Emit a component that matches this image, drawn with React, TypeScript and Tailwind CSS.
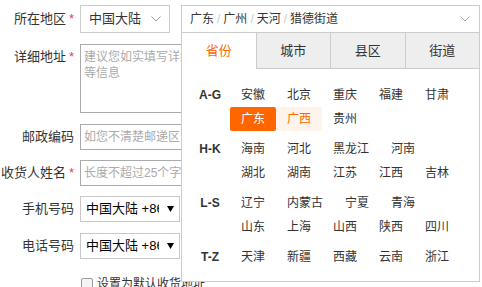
const groups: { label: string; rows: string[][] }[] = [
  { label: "A-G", rows: [["安徽", "北京", "重庆", "福建", "甘肃"], ["广东", "广西", "贵州"]] },
  { label: "H-K", rows: [["海南", "河北", "黑龙江", "河南"], ["湖北", "湖南", "江苏", "江西", "吉林"]] },
  { label: "L-S", rows: [["辽宁", "内蒙古", "宁夏", "青海"], ["山东", "上海", "山西", "陕西", "四川"]] },
  { label: "T-Z", rows: [["天津", "新疆", "西藏", "云南", "浙江"]] },
];

const tabs = ["省份", "城市", "县区", "街道"];

function Chevron({ color }: { color: string }) {
  return (
    <svg width="10" height="6" viewBox="0 0 10 6" fill="none">
      <polyline points="0.5,0.5 5,5 9.5,0.5" stroke={color} strokeWidth="1" />
    </svg>
  );
}

function Label({ text, required }: { text: string; required?: boolean }) {
  return (
    <div className="w-[74px] shrink-0 text-right text-[13px] leading-[16px] text-[#333]">
      {text}
      {required && <span className="ml-[3px] text-[#f4365d]">*</span>}
    </div>
  );
}

function CodeSelect() {
  return (
    <div className="ml-[6px] flex h-[26px] w-[100px] items-center border border-[#c8c8c8] pl-[5px]">
      <span className="w-[73px] overflow-hidden whitespace-nowrap text-[13px] text-black">中国大陆 +86</span>
      <svg className="ml-[8px]" width="7" height="6" viewBox="0 0 7 6">
        <polygon points="0,0 7,0 3.5,6" fill="#000" />
      </svg>
    </div>
  );
}

function AddressPanel() {
  return (
    <div className="absolute left-0 top-full z-10 w-full border-x border-b border-[#ccc] bg-white">
      <div className="flex h-[36px]">
        {tabs.map((t, i) =>
          i === 0 ? (
            <div key={t} className="flex flex-1 items-center justify-center bg-white text-[13px] text-[#f60]">
              {t}
            </div>
          ) : (
            <div
              key={t}
              className="flex flex-1 items-center justify-center border-b border-l border-[#ccc] bg-[#eee] text-[13px] text-[#333]"
            >
              {t}
            </div>
          )
        )}
      </div>
      <div className="flex flex-col gap-[6px] pb-[12px] pl-[8px] pt-[14px]">
        {groups.map((g) => (
          <div key={g.label} className="flex">
            <div className="w-[40px] text-center font-['Liberation_Sans'] text-[12px] font-bold leading-[24px] text-[#333]">
              {g.label}
            </div>
            <div className="flex flex-col">
              {g.rows.map((row, ri) => (
                <div key={ri} className="flex">
                  {row.map((p) => (
                    <span
                      key={p}
                      className={
                        p === "广东"
                          ? "h-[24px] rounded-[2px] bg-[#f60] px-[11px] text-[12px] leading-[24px] text-white"
                          : p === "广西"
                          ? "h-[24px] bg-[#fff4ec] px-[11px] text-[12px] leading-[24px] text-[#f60]"
                          : "h-[24px] px-[11px] text-[12px] leading-[24px] text-[#333]"
                      }
                    >
                      {p}
                    </span>
                  ))}
                </div>
              ))}
            </div>
          </div>
        ))}
      </div>
    </div>
  );
}

export default function App() {
  return (
    <div className="relative h-[287px] w-[482px] overflow-hidden bg-white font-['Liberation_Sans','Noto_Sans_CJK_SC',sans-serif]">
      <div className="flex flex-col pt-[5px]">
        {/* 所在地区 */}
        <div className="flex h-[28px] items-center">
          <Label text="所在地区" required />
          <div className="ml-[6px] flex h-[28px] w-[90px] items-center justify-between border border-[#ccc] pl-[8px] pr-[8px]">
            <span className="text-[13px] text-[#333]">中国大陆</span>
            <Chevron color="#999" />
          </div>
          <div className="relative ml-[11px] w-[299px]">
            <div className="flex h-[28px] items-center justify-between border border-[#ccc] pl-[8px] pr-[9px]">
              <span className="text-[12px] text-[#333]">
                广东<span className="mx-[3px] text-[#ccc]">/</span>广州<span className="mx-[3px] text-[#ccc]">/</span>天河
                <span className="mx-[3px] text-[#ccc]">/</span>猎德街道
              </span>
              <Chevron color="#aaa" />
            </div>
            <AddressPanel />
          </div>
        </div>

        {/* 详细地址 */}
        <div className="mt-[11px] flex items-start">
          <div className="pt-[5px]">
            <Label text="详细地址" required />
          </div>
          <textarea
            className="ml-[6px] h-[69px] w-[398px] resize-none border border-[#aaa] px-[3px] pt-[4px] text-[12px] leading-[16px] outline-none placeholder:text-[#aaa]"
            placeholder="建议您如实填写详细收货地址，例如街道名称，门牌号码，楼层和房间号等信息"
          />
        </div>

        {/* 邮政编码 */}
        <div className="mt-[11px] flex items-center">
          <Label text="邮政编码" />
          <input
            className="ml-[6px] h-[26px] w-[200px] border border-[#aaa] px-[3px] text-[12px] outline-none placeholder:text-[#aaa]"
            placeholder="如您不清楚邮递区号，请填写000000"
          />
        </div>

        {/* 收货人姓名 */}
        <div className="mt-[10px] flex items-center">
          <Label text="收货人姓名" required />
          <input
            className="ml-[6px] h-[26px] w-[200px] border border-[#aaa] px-[3px] text-[12px] outline-none placeholder:text-[#aaa]"
            placeholder="长度不超过25个字符"
          />
        </div>

        {/* 手机号码 */}
        <div className="mt-[10px] flex items-center">
          <Label text="手机号码" />
          <CodeSelect />
        </div>

        {/* 电话号码 */}
        <div className="mt-[11px] flex items-center">
          <Label text="电话号码" />
          <CodeSelect />
        </div>

        {/* 默认地址 */}
        <div className="mt-[17px] flex items-center pl-[81px]">
          <span className="h-[12px] w-[12px] rounded-[2px] border border-[#999] bg-[#f4f4f4]" />
          <span className="ml-[4px] text-[12px] leading-[16px] text-[#333]">设置为默认收货地址</span>
        </div>
      </div>
    </div>
  );
}
